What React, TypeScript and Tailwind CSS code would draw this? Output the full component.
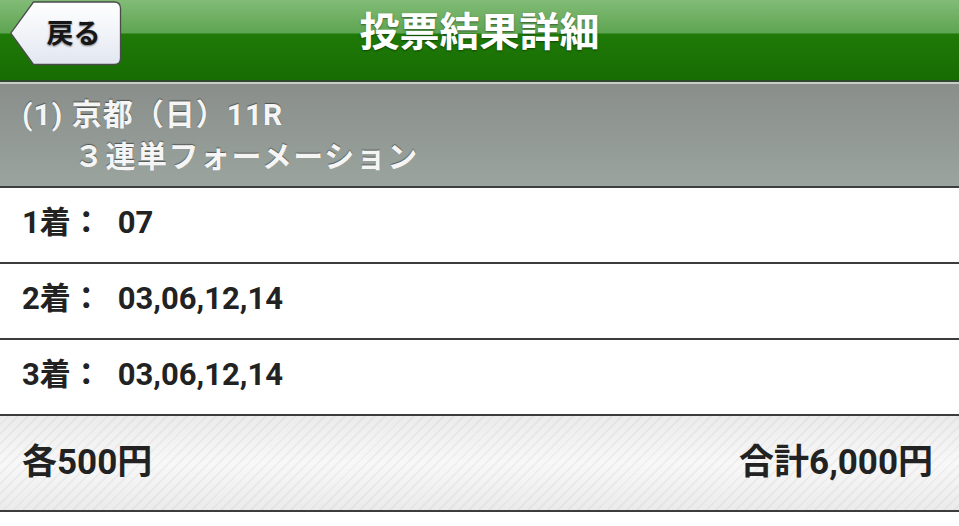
import React from "react";

const font = "font-['Roboto','Noto_Sans_CJK_JP',sans-serif]";

const BackButton = () => (
  <button className="relative ml-[10px] h-[65px] w-[112px] shrink-0">
    <svg className="absolute inset-0" width="112" height="65" viewBox="0 0 112 65">
      <defs>
        <linearGradient id="backFill" x1="0" y1="0" x2="0" y2="1">
          <stop offset="0" stopColor="#ffffff" />
          <stop offset="1" stopColor="#e2e7f0" />
        </linearGradient>
      </defs>
      <path
        d="M23.5 1 H104 Q110.5 1 110.5 7.5 V57 Q110.5 63.5 104 63.5 H23.5 L0.8 32.2 Z"
        fill="url(#backFill)"
        stroke="#4b4b4b"
        strokeWidth="1.3"
      />
    </svg>
    <span className="relative block pl-[15px] text-[27px] font-bold leading-[64px] text-[#161616] [text-shadow:0_1px_2px_rgba(0,0,0,0.55)]">
      戻る
    </span>
  </button>
);

const Row = ({ label, value }: { label: string; value: string }) => (
  <div className="flex h-[76px] items-center gap-[16px] border-b-2 border-[#3c3c3c] bg-white pl-[22px] pb-[4px] text-[31px] font-bold text-[#222]">
    <span>{label}：</span>
    <span>{value}</span>
  </div>
);

export default function App() {
  return (
    <div className={`${font} min-h-[526px] w-full bg-white`}>
      <header className="border-b-2 border-[#2f4a2a]">
        <div className="grid h-[80px] grid-cols-[1fr_auto_1fr] items-start bg-[linear-gradient(180deg,#82bb77_0px,#5ea551_33px,#1f7a08_34px,#176c02_80px)] pt-[1px]">
          <BackButton />
          <h1 className="text-[40px] font-bold leading-[64px] text-white [text-shadow:0_1px_2px_rgba(0,0,0,0.45)]">
            投票結果詳細
          </h1>
          <div />
        </div>
      </header>
      <section className="border-t-2 border-[#c7cdc7] border-b-2 border-b-[#3d3f3e] bg-[linear-gradient(180deg,#898e8a,#9ba49e)] pt-[10px] pb-[8px] text-[30px] font-bold text-[#f5f5f5] [text-shadow:0_-1px_1px_rgba(0,0,0,0.45)]">
        <p className="pl-[22px] leading-[42px] tracking-[1px]">(1) 京都（日）11R</p>
        <p className="pl-[74px] leading-[42px] tracking-[1.5px]">３連単フォーメーション</p>
      </section>
      <Row label="1着" value="07" />
      <Row label="2着" value="03,06,12,14" />
      <Row label="3着" value="03,06,12,14" />
      <footer className="flex h-[96px] items-center justify-between border-b-2 border-[#3c3c3c] bg-[repeating-linear-gradient(135deg,rgba(0,0,0,0)_0px,rgba(0,0,0,0)_5px,rgba(0,0,0,0.035)_5px,rgba(0,0,0,0.035)_7px),linear-gradient(180deg,#ebebeb,#f8f8f8_50%,#ebebeb)] pr-[26px] pl-[22px] text-[35px] font-bold text-[#222]">
        <span>各500円</span>
        <span>合計6,000円</span>
      </footer>
    </div>
  );
}
